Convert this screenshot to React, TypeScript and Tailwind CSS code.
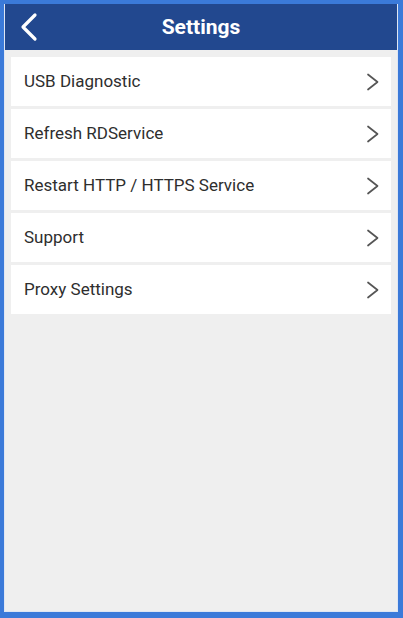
import React from "react";

const items = [
  "USB Diagnostic",
  "Refresh RDService",
  "Restart HTTP / HTTPS Service",
  "Support",
  "Proxy Settings",
];

function Chevron() {
  return (
    <svg width="14" height="18" viewBox="0 0 14 18" fill="none">
      <path d="M2 1.5 L11.5 9 L2 16.5" stroke="#555" strokeWidth="1.7" strokeLinecap="round" strokeLinejoin="round" />
    </svg>
  );
}

export default function App() {
  return (
    <div
      className="w-[403px] h-[618px] bg-[#3b7ad9] pt-[4px] pl-[4px] pr-[5px] pb-[6px]"
      style={{ fontFamily: "Roboto, 'Noto Sans', sans-serif" }}
    >
      <div className="h-full flex flex-col bg-[#efefef] border-r border-b border-l border-[#dfe6f3]">
        <div className="h-[46px] bg-[#22488f] flex items-center relative shrink-0">
          <div className="pl-[13px] flex items-center">
            <svg width="22" height="30" viewBox="0 0 22 30" fill="none">
              <path d="M17 3 L5 15 L17 27" stroke="#fff" strokeWidth="3.2" strokeLinecap="round" strokeLinejoin="round" />
            </svg>
          </div>
          <div className="absolute inset-0 flex items-center justify-center text-white text-[21px] font-bold pt-[1px]">
            Settings
          </div>
        </div>
        <div className="flex flex-col gap-[3px] pt-[7px] px-[6px]">
          {items.map((t) => (
            <div key={t} className="h-[49px] bg-white flex items-center justify-between pl-[13px] pr-[11px]">
              <span className="text-[17px] text-[#2e2e2e]">{t}</span>
              <Chevron />
            </div>
          ))}
        </div>
      </div>
    </div>
  );
}
